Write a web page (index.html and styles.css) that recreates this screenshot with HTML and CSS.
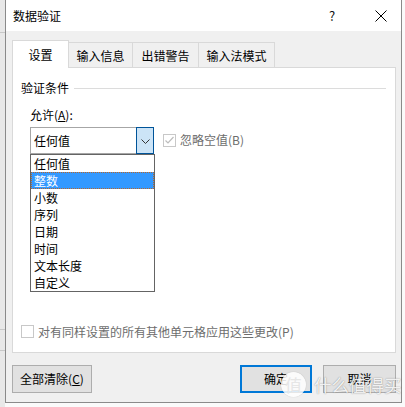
FILE: index.html
```html
<!DOCTYPE html>
<html lang="zh-CN">
<head>
<meta charset="utf-8">
<title>数据验证</title>
<link rel="stylesheet" href="styles.css">
</head>
<body>
<div class="screen">
  <div class="sheet-strip">
    <div class="strip-line l1"></div>
    <div class="strip-line l2"></div>
    <div class="strip-line l3"></div>
  </div>
  <div class="dialog">
    <div class="titlebar">
      <span class="title">数据验证</span>
      <span class="help">?</span>
      <span class="close">
        <svg width="12" height="12" viewBox="0 0 12 12"><path d="M0.5 0.5 L11.5 11.5 M11.5 0.5 L0.5 11.5" stroke="#000" stroke-width="1" fill="none"/></svg>
      </span>
    </div>
    <div class="body">
      <div class="tabs">
        <div class="tab active">设置</div>
        <div class="tab">输入信息</div>
        <div class="tab">出错警告</div>
        <div class="tab">输入法模式</div>
      </div>
      <div class="panel">
        <div class="group-head"><span>验证条件</span><span class="group-line"></span></div>
        <div class="label">允许(<u>A</u>):</div>
        <div class="combo-row">
          <div class="combo">
            <span class="combo-text">任何值</span>
            <span class="combo-btn">
              <svg width="9" height="5" viewBox="0 0 9 5"><path d="M0.5 0.5 L4.5 4.5 L8.5 0.5" stroke="#333" stroke-width="1" fill="none"/></svg>
            </span>
          </div>
          <div class="check disabled">
            <span class="box checked">
              <svg width="11" height="11" viewBox="0 0 11 11"><path d="M1.5 5.5 L4 8 L9.5 2" stroke="#bcbcbc" stroke-width="1.2" fill="none"/></svg>
            </span>
            <span>忽略空值(B)</span>
          </div>
        </div>
        <ul class="dropdown">
          <li>任何值</li>
          <li class="sel">整数</li>
          <li>小数</li>
          <li>序列</li>
          <li>日期</li>
          <li>时间</li>
          <li>文本长度</li>
          <li>自定义</li>
        </ul>
        <div class="check disabled apply">
          <span class="box"></span>
          <span>对有同样设置的所有其他单元格应用这些更改(P)</span>
        </div>
      </div>
      <div class="buttons">
        <button class="btn clear">全部清除(<u>C</u>)</button>
        <span class="spacer"></span>
        <button class="btn ok">确定</button>
        <button class="btn cancel">取消</button>
      </div>
    </div>
  </div>
  <div class="watermark">
    <span class="wm-logo">值</span>
    <span class="wm-text">什么值得买</span>
  </div>
</div>
</body>
</html>
```
FILE: styles.css
```css
* { box-sizing: border-box; }
html, body { margin: 0; padding: 0; }
body {
  background: #fafafa;
  font-family: "Noto Sans CJK SC", "Noto Sans", sans-serif;
  font-size: 12px;
  line-height: 16px;
  color: #000;
}
.screen {
  position: relative;
  width: 405px;
  height: 407px;
  display: flex;
  overflow: hidden;
}
.sheet-strip {
  width: 5px;
  height: 407px;
  background: #e8e8e8;
  display: flex;
  flex-direction: column;
  flex: none;
}
.strip-line { height: 1px; background: #c8c8c8; }
.l1 { margin-top: 32px; }
.l2 { margin-top: 296px; }
.l3 { margin-top: 20px; }
.dialog {
  width: 397px;
  height: 403px;
  flex: none;
  border: 1px solid #8a8a8a;
  border-top: none;
  background: #f0f0f0;
  display: flex;
  flex-direction: column;
}
.titlebar {
  height: 31px;
  background: #fff;
  display: flex;
  align-items: center;
  padding-left: 7px;
  flex: none;
}
.title { flex: 1; font-size: 12px; }
.help { width: 10px; margin-right: 36px; font-size: 13px; color: #111; }
.close { width: 12px; height: 12px; margin-right: 14px; display: flex; }
.body {
  flex: 1;
  display: flex;
  flex-direction: column;
  padding: 9px 5px 9px 6px;
}
.tabs {
  display: flex;
  align-items: flex-end;
  height: 27px;
  flex: none;
}
.tab {
  height: 25px;
  border: 1px solid #d9d9d9;
  border-bottom: none;
  background: #f0f0f0;
  display: flex;
  align-items: center;
  justify-content: center;
  margin-left: -1px;
  padding-top: 2px;
}
.tab:nth-child(1) { width: 57px; margin-left: 0; }
.tab:nth-child(2) { width: 65px; }
.tab:nth-child(3) { width: 67px; }
.tab:nth-child(4) { width: 77px; }
.tab.active {
  height: 28px;
  background: #fff;
  margin-bottom: -1px;
  position: relative;
  z-index: 1;
  padding-top: 0;
}
.panel {
  position: relative;
  height: 286px;
  flex: none;
  background: #fff;
  border: 1px solid #d9d9d9;
  display: flex;
  flex-direction: column;
  padding: 12px 0 14px 8px;
}
.group-head {
  display: flex;
  align-items: center;
  height: 16px;
}
.group-line {
  flex: 1;
  height: 1px;
  background: #dcdcdc;
  margin: 1px 9px 0 5px;
}
.label { margin: 11px 0 0 9px; height: 16px; }
.combo-row {
  display: flex;
  align-items: flex-start;
  margin: 4px 0 0 9px;
}
.combo {
  width: 124px;
  height: 27px;
  border: 1px solid #a6a6a6;
  display: flex;
  align-items: stretch;
}
.combo-text { flex: 1; padding: 5px 0 0 3px; }
.combo-btn {
  width: 18px;
  background: #cce4f7;
  border: 1px solid #005499;
  margin: -1px -1px -1px 0;
  display: flex;
  align-items: center;
  justify-content: center;
  padding-top: 1px;
}
.check {
  display: flex;
  align-items: center;
  gap: 4px;
}
.check.disabled { color: #6d6d6d; }
.combo-row .check { margin: 5px 0 0 9px; }
.box {
  width: 13px;
  height: 13px;
  border: 1px solid #c8c8c8;
  background: #fff;
  display: flex;
  align-items: center;
  justify-content: center;
  flex: none;
}
.dropdown {
  position: absolute;
  left: 17px;
  top: 86px;
  width: 125px;
  margin: 0;
  padding: 0;
  list-style: none;
  border: 1px solid #646464;
  background: #fff;
  z-index: 2;
}
.dropdown li {
  height: 17px;
  line-height: 17px;
  padding-left: 3px;
}
.dropdown li.sel {
  background: #3399ff;
  color: #fff;
  outline: 1px dotted #b8672a;
  outline-offset: -1px;
}
.apply {
  margin-top: auto;
  height: 13px;
  gap: 4px;
}
.buttons {
  display: flex;
  margin-top: 12px;
  height: 28px;
  flex: none;
  padding-left: 0;
}
.spacer { flex: 1; }
.btn {
  font-family: inherit;
  font-size: 12px;
  line-height: 16px;
  color: #000;
  background: #e1e1e1;
  border: 1px solid #adadad;
  padding: 0;
  height: 28px;
}
.clear { width: 80px; }
.ok { width: 72px; border: 2px solid #0078d7; margin-right: 11px; }
.cancel { width: 73px; }
.watermark {
  position: absolute;
  left: 281px;
  top: 372px;
  display: flex;
  align-items: center;
  gap: 8px;
  z-index: 5;
  color: rgba(255,255,255,0.9);
  text-shadow: 0 0 1px rgba(0,0,0,0.35), 0 0 2px rgba(0,0,0,0.15);
}
.wm-logo {
  width: 25px;
  height: 25px;
  border-radius: 50%;
  background: rgba(255,255,255,0.85);
  color: #e6e6e6;
  font-size: 17px;
  line-height: 25px;
  text-align: center;
  box-shadow: 0 0 1px rgba(0,0,0,0.25);
  text-shadow: none;
}
.wm-text {
  font-size: 17.5px;
  line-height: 24px;
  letter-spacing: 0;
}
```
